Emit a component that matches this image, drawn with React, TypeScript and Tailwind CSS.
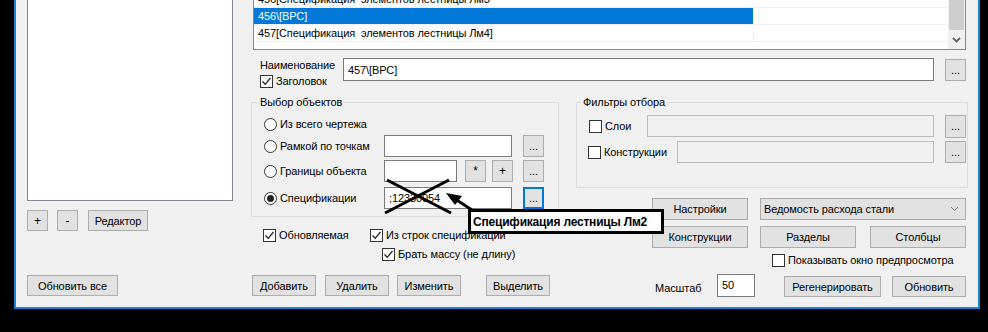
import React from "react";

const Btn = ({
  className = "",
  focused = false,
  children,
}: {
  className?: string;
  focused?: boolean;
  children?: React.ReactNode;
}) => (
  <div
    className={`flex items-center justify-center bg-[#e1e1e1] text-black ${
      focused ? "border-2 border-[#0078d7]" : "border border-[#adadad]"
    } ${className}`}
  >
    {children}
  </div>
);

const TextBox = ({ className = "", children }: { className?: string; children?: React.ReactNode }) => (
  <div className={`flex items-center bg-white border border-[#7a7a7a] ${className}`}>{children}</div>
);

const Check = ({ checked }: { checked?: boolean }) => (
  <span className="flex h-[13px] w-[13px] shrink-0 items-center justify-center border border-[#333] bg-white">
    {checked && (
      <svg width="11" height="11" viewBox="0 0 11 11">
        <polyline points="1.5,5.5 4.2,8.3 9.5,2" fill="none" stroke="#222" strokeWidth="1.3" />
      </svg>
    )}
  </span>
);

const Radio = ({ checked }: { checked?: boolean }) => (
  <span className="flex h-[13px] w-[13px] shrink-0 items-center justify-center rounded-full border border-[#333] bg-white">
    {checked && <span className="h-[7px] w-[7px] rounded-full bg-[#222]" />}
  </span>
);

const LIST_ROWS = [
  { text: "456[Спецификация  элементов лестницы Лм3", selected: false },
  { text: "456\\[ВРС]", selected: true },
  { text: "457[Спецификация  элементов лестницы Лм4]", selected: false },
];

export default function App() {
  return (
    <div className="relative h-[332px] w-[988px] overflow-hidden whitespace-nowrap bg-black font-['Liberation_Sans',Arial,sans-serif] text-[11px] leading-[16px] tracking-[-0.1px] text-black">
      <div className="ml-[14px] flex h-[309px] w-[966px] border-x-2 border-b-2 border-[#1883d7] bg-[#f0f0f0]">
        {/* Left column */}
        <div className="flex w-[235px] shrink-0 flex-col pl-[11px]">
          <div className="h-[201px] w-[206px] border-x border-b border-[#828790] bg-white" />
          <div className="mt-[9px] flex h-[21px]">
            <Btn className="h-[21px] w-[21px] text-[12px]">+</Btn>
            <Btn className="ml-[9px] h-[21px] w-[21px] text-[12px]">-</Btn>
            <Btn className="ml-[10px] h-[21px] w-[60px]">Редактор</Btn>
          </div>
          <Btn className="mt-[44px] h-[21px] w-[91px]">Обновить все</Btn>
        </div>

        {/* Right column */}
        <div className="flex w-[717px] flex-col">
          {/* List */}
          <div className="ml-[2px] flex h-[50px] w-[713px] overflow-hidden border-x border-b border-[#828790] bg-white">
            <div className="flex-1 -mt-[9px]">
              {LIST_ROWS.map((r) => (
                <div key={r.text} className="flex h-[17px] border-b border-[#f0f0f0]">
                  <div
                    className={`w-[500px] whitespace-pre pl-[4px] leading-[16px] border-r border-[#f0f0f0] ${
                      r.selected ? "bg-[#0078d7] text-white" : ""
                    }`}
                  >
                    {r.text}
                  </div>
                  <div className="flex-1" />
                </div>
              ))}
            </div>
            <div className="flex w-[17px] flex-col bg-[#f0f0f0] px-[1px]">
              <div className="h-[30px] bg-[#cdcdcd]" />
              <div className="flex flex-1 items-center justify-center">
                <svg width="9" height="6" viewBox="0 0 9 6">
                  <polyline points="1,1 4.5,4.5 8,1" fill="none" stroke="#606060" strokeWidth="1.8" />
                </svg>
              </div>
            </div>
          </div>

          {/* Name row */}
          <div className="mt-[8px] flex h-[37px] items-start">
            <div className="-mt-[1px] flex w-[92px] flex-col pl-[9px]">
              <span>Наименование</span>
              <div className="mt-[1px] flex h-[14px] items-center gap-[3px]">
                <Check checked />
                <span>Заголовок</span>
              </div>
            </div>
            <TextBox className="h-[23px] w-[591px] pl-[4px]">457\[ВРС]</TextBox>
            <Btn className="ml-[11px] mt-[1px] h-[22px] w-[21px]">...</Btn>
          </div>

          {/* Middle */}
          <div className="flex h-[179px]">
            {/* Left middle */}
            <div className="flex w-[308px] flex-col">
              <fieldset className="h-[122px] border border-[#dcdcdc] pl-[12px]">
                <legend className="-ml-[5px] px-[1px] leading-[14px]">Выбор объектов</legend>
                <div className="mt-[7px] flex h-[16px] items-center gap-[3px]">
                  <Radio />
                  <span>Из всего чертежа</span>
                </div>
                <div className="mt-[3px] flex h-[22px] items-center">
                  <div className="flex w-[120px] items-center gap-[3px]">
                    <Radio />
                    <span>Рамкой по точкам</span>
                  </div>
                  <TextBox className="h-[22px] w-[128px]" />
                  <Btn className="ml-[11px] h-[22px] w-[21px]">...</Btn>
                </div>
                <div className="mt-[3px] flex h-[22px] items-center">
                  <div className="flex w-[120px] items-center gap-[3px]">
                    <Radio />
                    <span>Границы объекта</span>
                  </div>
                  <TextBox className="h-[22px] w-[73px]" />
                  <Btn className="ml-[8px] h-[22px] w-[21px] text-[12px]">*</Btn>
                  <Btn className="ml-[6px] h-[22px] w-[21px] text-[12px]">+</Btn>
                  <Btn className="ml-[10px] h-[22px] w-[21px]">...</Btn>
                </div>
                <div className="mt-[5px] flex h-[22px] items-center">
                  <div className="flex w-[120px] items-center gap-[3px]">
                    <Radio checked />
                    <span>Спецификации</span>
                  </div>
                  <TextBox className="h-[22px] w-[128px] pl-[4px]">;12330054</TextBox>
                  <Btn focused className="ml-[11px] h-[22px] w-[21px]">...</Btn>
                </div>
              </fieldset>
              <div className="mt-[10px] flex h-[16px] items-center pl-[12px]">
                <div className="flex w-[107px] items-center gap-[3px]">
                  <Check checked />
                  <span>Обновляемая</span>
                </div>
                <div className="flex items-center gap-[3px]">
                  <Check checked />
                  <span>Из строк спецификации</span>
                </div>
              </div>
              <div className="mt-[3px] flex h-[16px] items-center gap-[3px] pl-[131px]">
                <Check checked />
                <span>Брать массу (не длину)</span>
              </div>
            </div>

            {/* Right middle */}
            <div className="ml-[17px] flex w-[392px] flex-col">
              <fieldset className="h-[93px] border border-[#dcdcdc] pl-[12px] pr-[1px]">
                <legend className="-ml-[8px] px-[2px] leading-[14px]">Фильтры отбора</legend>
                <div className="mt-[6px] flex h-[22px] items-center">
                  <div className="flex w-[58px] items-center gap-[3px]">
                    <Check />
                    <span>Слои</span>
                  </div>
                  <div className="h-[22px] flex-1 border border-[#bcbcbc] bg-[#f0f0f0]" />
                  <Btn className="ml-[11px] h-[23px] w-[21px] text-[#444]">...</Btn>
                </div>
                <div className="mt-[4px] flex h-[22px] items-center">
                  <div className="-ml-[1px] flex w-[89px] items-center gap-[3px]">
                    <Check />
                    <span>Конструкции</span>
                  </div>
                  <div className="h-[22px] flex-1 border border-[#bcbcbc] bg-[#f0f0f0]" />
                  <Btn className="ml-[11px] h-[22px] w-[21px] text-[#444]">...</Btn>
                </div>
              </fieldset>
              <div className="ml-[76px] mt-[10px] flex h-[22px]">
                <Btn className="h-[22px] w-[96px]">Настройки</Btn>
                <div className="ml-[12px] flex h-[22px] w-[206px] items-center justify-between border border-[#adadad] bg-[#e1e1e1] pl-[3px] pr-[6px]">
                  <span>Ведомость расхода стали</span>
                  <svg width="9" height="6" viewBox="0 0 9 6">
                    <polyline points="1,1 4.5,4.5 8,1" fill="none" stroke="#7a7a7a" strokeWidth="1" />
                  </svg>
                </div>
              </div>
              <div className="ml-[76px] mt-[6px] flex h-[22px]">
                <Btn className="h-[22px] w-[96px]">Конструкции</Btn>
                <Btn className="ml-[12px] h-[22px] w-[96px]">Разделы</Btn>
                <Btn className="ml-[14px] h-[22px] w-[96px]">Столбцы</Btn>
              </div>
              <div className="mt-[4px] flex h-[16px] items-center gap-[3px] pl-[196px]">
                <Check />
                <span>Показывать окно предпросмотра</span>
              </div>
            </div>
          </div>

          {/* Bottom row */}
          <div className="flex h-[23px] items-center">
            <Btn className="ml-[1px] h-[21px] w-[64px]">Добавить</Btn>
            <Btn className="ml-[9px] h-[21px] w-[64px]">Удалить</Btn>
            <Btn className="ml-[8px] h-[21px] w-[64px]">Изменить</Btn>
            <Btn className="ml-[25px] h-[21px] w-[64px]">Выделить</Btn>
            <span className="ml-[105px] mt-[4px] w-[62px]">Масштаб</span>
            <div className="h-[23px] w-[38px] border border-[#7a7a7a] bg-white pl-[4px] pt-[2px]">50</div>
            <Btn className="ml-[29px] mt-[2px] h-[21px] w-[97px]">Регенерировать</Btn>
            <Btn className="ml-[11px] mt-[2px] h-[21px] w-[74px]">Обновить</Btn>
          </div>
        </div>
      </div>

      {/* Annotation overlay */}
      <svg className="pointer-events-none absolute left-0 top-0" width="988" height="332">
        <line x1="387" y1="180" x2="451" y2="213" stroke="#000" strokeWidth="3" />
        <line x1="449" y1="180" x2="385" y2="213" stroke="#000" strokeWidth="3" />
        <line x1="472" y1="210" x2="452" y2="197" stroke="#000" strokeWidth="3" />
        <polygon points="446,193 462,196 455,205" fill="#000" />
      </svg>
      <div className="absolute left-[468px] top-[209px] flex h-[25px] w-[196px] items-center border-[3px] border-black bg-white pl-[2px] text-[12px] font-bold tracking-[-0.2px]">
        Спецификация лестницы Лм2
      </div>
    </div>
  );
}
